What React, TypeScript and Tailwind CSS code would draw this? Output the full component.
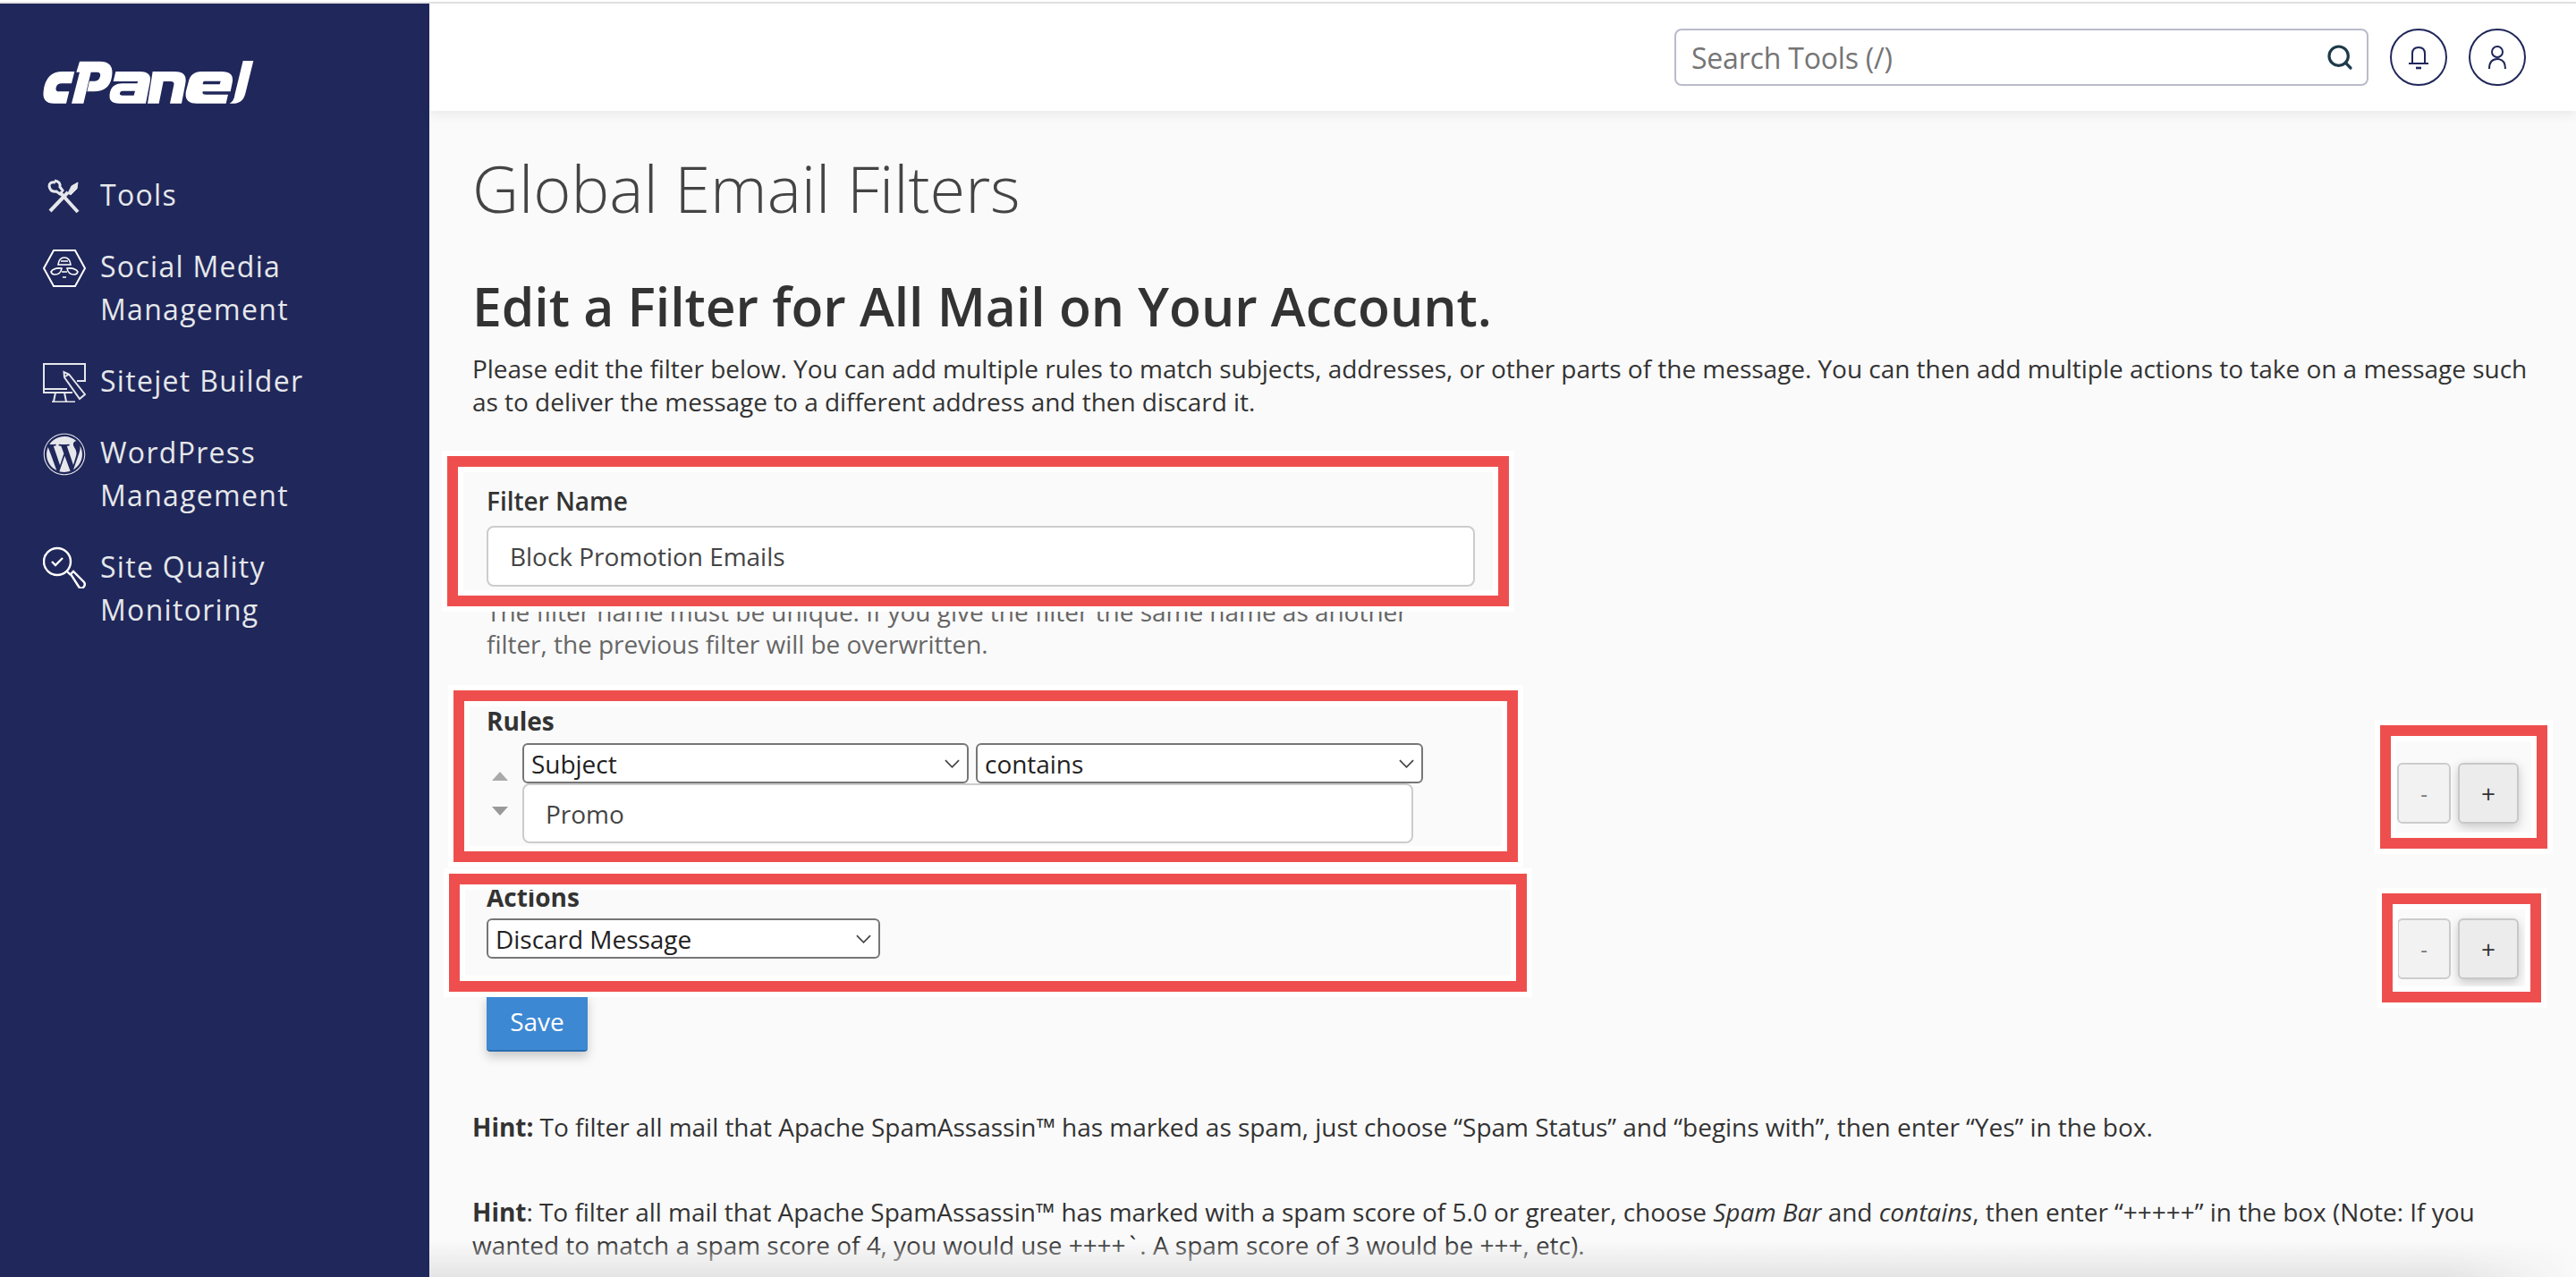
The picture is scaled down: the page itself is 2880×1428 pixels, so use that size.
import { Search } from 'lucide-react';
import { FaWordpress } from 'react-icons/fa';
import type { ReactNode } from 'react';

const Logo = () => (
  <svg viewBox="0 0 750 195" className="w-[250px] h-[65px] -ml-[9px] fill-white" fillRule="evenodd">
    <path d="M130 60 L120 100 L87 100 Q72 100 68 113 Q65 127 78 127 L112 127 L102 167 L62 167 Q20 167 26 125 Q33 60 90 60 Z" />
    <path d="M147 26 L215 26 Q264 26 255 78 Q247 127 195 127 L172 127 L180 92 L198 92 Q212 92 216 76 Q219 62 205 62 L185 62 L160 167 L120 167 L147 62 L136 62 Z" />
    <path d="M268 60 L350 60 Q390 60 383 95 L369 167 L280 167 Q243 167 248 135 Q253 100 290 100 L340 100 L343 93 L260 93 Z M291 125 L333 125 L329 140 L291 140 Q280 140 282 132 Q284 125 291 125 Z" />
    <path d="M392 60 L465 60 Q510 60 502 100 L489 167 L450 167 L463 105 Q466 93 452 93 L428 93 L413 167 L375 167 Z" />
    <path d="M555 60 L625 60 Q667 60 659 98 L653 127 L560 127 Q557 137 570 137 L645 137 L638 167 L540 167 Q496 167 504 125 L512 95 Q520 60 555 60 Z M565 92 L620 92 L617 103 L560 103 Q561 92 565 92 Z" />
    <path d="M695 24 L730 24 L704 130 Q696 167 665 167 L650 167 Q665 160 668 135 Z" />
  </svg>
);

const ToolsIcon = () => (
  <svg viewBox="0 0 48 48" className="w-[48px] h-[48px] shrink-0 text-[#e5e7eb]" fill="none" stroke="currentColor">
    <path d="M19 21 L39 43" strokeWidth="4" />
    <path d="M14 10 Q7 9 7 14 Q8 21 15 20 L19 23 L22 19 L19 15 Q20 9 13 8" strokeWidth="3" />
    <path d="M8 42 L28 21" strokeWidth="4" />
    <path d="M28 22 L32 14 L39 10 L38 17 L31 24 Z" fill="currentColor" strokeWidth="1" />
  </svg>
);

const SocialIcon = () => (
  <svg viewBox="0 0 48 48" className="w-[48px] h-[48px] shrink-0 text-white" fill="none" stroke="currentColor" strokeWidth="2">
    <path d="M1 26 L12 6 H36 L47 26 L36 46 H12 Z" />
    <path d="M17 22 Q18 14 24 14 Q30 14 31 22 Z M20 18 H28" strokeWidth="1.6" />
    <path d="M9 30 Q12 25 21 26 Q20 33 13 33 Q10 33 9 30 Z M39 30 Q36 25 27 26 Q28 33 35 33 Q38 33 39 30 Z" strokeWidth="1.6" />
    <path d="M21 30 H27 M22 36 H26" strokeWidth="1.6" />
  </svg>
);

const SitejetIcon = () => (
  <svg viewBox="0 0 48 48" className="w-[48px] h-[48px] shrink-0 text-[#e5e7eb]" fill="none" stroke="currentColor" strokeWidth="2">
    <path d="M38 24 H47 V5 H1 V37 H33 M1 33 H27" />
    <path d="M14 37 L12 47 M24 37 L26 47 M10 47.5 H36" />
    <path d="M24 20 L23.5 14 L29 16.5 L47 39 L41 44 Z M25 19 L29 16.5" fill="#20275a" />
  </svg>
);

const QualityIcon = () => (
  <svg viewBox="0 0 48 48" className="w-[48px] h-[48px] shrink-0 text-white" fill="none" stroke="currentColor" strokeWidth="2.4">
    <circle cx="16" cy="18" r="15" />
    <path d="M10 18 L14 22 L22 14" />
    <path d="M27 29 L31 33" />
    <path d="M31 32 L34 29 L46 41 Q48 44 45 47 Q42 49 40 46 Z" />
  </svg>
);

const NavItem = ({ icon, children }: { icon: ReactNode; children: ReactNode }) => (
  <div className="flex gap-[16px]">
    {icon}
    <span className="w-[300px] text-[32px] leading-[48px] tracking-[1.3px] text-[#e5e7eb]">{children}</span>
  </div>
);

const Sidebar = () => (
  <aside className="w-[480px] shrink-0 bg-[#20275a] pl-[49px] pt-[56px]">
    <Logo />
    <nav className="mt-[69px] -ml-[1px] flex flex-col gap-[32px]">
      <NavItem icon={<ToolsIcon />}>Tools</NavItem>
      <NavItem icon={<SocialIcon />}>Social Media Management</NavItem>
      <NavItem icon={<SitejetIcon />}>Sitejet Builder</NavItem>
      <NavItem icon={<FaWordpress className="w-[48px] h-[48px] mt-[2px] shrink-0 text-[#e5e7eb]" />}>WordPress Management</NavItem>
      <NavItem icon={<QualityIcon />}>Site Quality Monitoring</NavItem>
    </nav>
  </aside>
);

const Header = () => (
  <header className="relative z-10 h-[120px] shrink-0 bg-white shadow-[0_4px_12px_rgba(0,0,0,0.07)] flex items-center justify-end gap-[24px] pr-[56px]">
    <div className="w-[776px] h-[64px] rounded-[8px] border-2 border-[#b9bbcb] bg-white flex items-center justify-between pl-[17px] pr-[14px]">
      <span className="pt-[2px] text-[32px] tracking-[-0.2px] text-[#757575]">Search Tools (/)</span>
      <Search className="w-[32px] h-[32px] text-[#1d3a4a]" strokeWidth={2.4} />
    </div>
    <div className="w-[64px] h-[64px] rounded-full border-2 border-[#20275a] flex items-center justify-center">
      <svg viewBox="0 0 32 32" className="w-[32px] h-[32px] text-[#20275a]" fill="none" stroke="currentColor" strokeWidth="2">
        <path d="M9 22 V12 Q9 5 16 5 Q23 5 23 12 V22" />
        <path d="M5 23 H27" />
        <path d="M13 28 H19" strokeWidth="2.6" />
      </svg>
    </div>
    <div className="w-[64px] h-[64px] rounded-full border-2 border-[#20275a] flex items-center justify-center">
      <svg viewBox="0 0 32 32" className="w-[32px] h-[32px] text-[#20275a]" fill="none" stroke="currentColor" strokeWidth="2">
        <circle cx="16" cy="10" r="6" />
        <path d="M7 29 Q7 18 16 18 Q25 18 25 29" />
      </svg>
    </div>
  </header>
);

const Chevron = () => (
  <svg viewBox="0 0 18 10" className="absolute right-[10px] top-[18px] w-[17px] h-[10px] text-[#444] pointer-events-none" fill="none" stroke="currentColor" strokeWidth="1.8">
    <path d="M1 1 L9 9 L17 1" />
  </svg>
);

const Select = ({ value, className }: { value: string; className: string }) => (
  <div className={`relative h-[45px] ${className}`}>
    <select
      defaultValue={value}
      className="w-full h-full appearance-none rounded-[6px] border-2 border-[#767676] bg-white pl-[8px] text-[28px] leading-[38px] text-[#222]"
    >
      <option>{value}</option>
    </select>
    <Chevron />
  </div>
);

const StepButtons = () => (
  <div className="flex gap-[8px] shrink-0">
    <button className="w-[60px] h-[68px] rounded-[6px] border-2 border-[#ccc] bg-[#f2f2f2] text-[24px] text-[#777]">-</button>
    <button className="w-[68px] h-[68px] rounded-[6px] border-2 border-[#c8c8c8] bg-[#ececec] text-[28px] text-[#333] shadow-[0_4px_12px_rgba(0,0,0,0.2)]">+</button>
  </div>
);

const Annotation = ({ className }: { className: string }) => (
  <div className={`absolute border-[12px] border-[#ee4f4e] outline-[6px] outline-solid outline-white shadow-[inset_0_0_0_6px_#fff] pointer-events-none ${className}`} />
);

export default function App() {
  return (
    <div className="relative h-[1428px] w-[2880px] overflow-hidden flex flex-col bg-white font-['Open_Sans',sans-serif] text-[#333]">
      <div className="h-[4px] shrink-0 bg-white border-b-2 border-[#e3e3e3]" />
      <div className="flex flex-1 min-h-0">
        <Sidebar />
        <main className="relative flex-1 flex flex-col bg-[#fafafa]">
          <Header />
          <div className="px-[48px] text-[28px] leading-[37px] tracking-[-0.03px]">
            <h1 className="mt-[42px] text-[72px] leading-[88px] font-light text-[#444]">Global Email Filters</h1>
            <h2 className="mt-[52px] text-[58.8px] leading-[72px] font-semibold">Edit a Filter for All Mail on Your Account.</h2>
            <p className="mt-[16px]">
              Please edit the filter below. You can add multiple rules to match subjects, addresses, or other parts of the message. You can then add multiple actions to take on a message such as to deliver the message to a different address and then discard it.
            </p>

            <form className="pl-[16px] pr-[16px]">
              <label className="block mt-[72px] font-semibold leading-[40px]">Filter Name</label>
              <input
                defaultValue="Block Promotion Emails"
                className="mt-[8px] block w-[1105px] h-[68px] rounded-[8px] border-2 border-[#ccc] bg-white px-[24px] text-[#444]"
              />
              <p className="mt-[10px] w-[1060px] leading-[36px] text-[#666]">
                The filter name must be unique. If you give the filter the same name as another filter, the previous filter will be overwritten.
              </p>

              <label className="block mt-[48px] font-bold leading-[40px]">Rules</label>
              <div className="mt-[5px] flex items-center justify-between">
                <div className="flex items-center">
                  <div className="w-[40px] pl-[6px] flex flex-col gap-[29px]">
                    <div className="w-0 h-0 border-x-[9px] border-x-transparent border-b-[10px] border-b-[#aaa]" />
                    <div className="w-0 h-0 border-x-[9px] border-x-transparent border-t-[10px] border-t-[#999]" />
                  </div>
                  <div>
                    <div className="flex gap-[8px]">
                      <Select value="Subject" className="w-[499px]" />
                      <Select value="contains" className="w-[500px]" />
                    </div>
                    <input
                      defaultValue="Promo"
                      className="block w-[996px] h-[67px] rounded-[8px] border-2 border-[#ccc] bg-white px-[24px] text-[#444]"
                    />
                  </div>
                </div>
                <StepButtons />
              </div>

              <label className="block mt-[40px] font-bold leading-[40px]">Actions</label>
              <div className="mt-[4px] h-[68px] flex items-start justify-between">
                <Select value="Discard Message" className="w-[440px]" />
                <StepButtons />
              </div>

              <button type="button" className="mt-[16px] w-[113px] h-[65px] rounded-[4px] bg-[#3d88d3] border-b-2 border-[#2a6db0] text-white shadow-[0_6px_12px_rgba(0,0,0,0.2)]">
                Save
              </button>
            </form>

            <p className="mt-[66px]">
              <strong className="font-bold">Hint:</strong> To filter all mail that Apache SpamAssassin™ has marked as spam, just choose “Spam Status” and “begins with”, then enter “Yes” in the box.
            </p>
            <p className="mt-[58px]">
              <strong className="font-bold">Hint</strong>: To filter all mail that Apache SpamAssassin™ has marked with a spam score of 5.0 or greater, choose <em>Spam Bar</em> and <em>contains</em>, then enter “+++++” in the box (Note: If you wanted to match a spam score of 4, you would use ++++<span className="px-[4px]">`</span>. A spam score of 3 would be +++, etc).
            </p>
          </div>
          <div className="absolute bottom-0 left-0 right-0 h-[40px] bg-gradient-to-b from-transparent to-[#e4e4e4] [mask-image:linear-gradient(to_right,black_94%,transparent)] pointer-events-none" />
        </main>
      </div>

      <Annotation className="left-[500px] top-[510px] w-[1187px] h-[168px]" />
      <Annotation className="left-[507px] top-[772px] w-[1190px] h-[192px]" />
      <Annotation className="left-[502px] top-[977px] w-[1205px] h-[132px]" />
      <Annotation className="left-[2661px] top-[811px] w-[187px] h-[138px]" />
      <Annotation className="left-[2663px] top-[999px] w-[178px] h-[122px]" />
    </div>
  );
}
